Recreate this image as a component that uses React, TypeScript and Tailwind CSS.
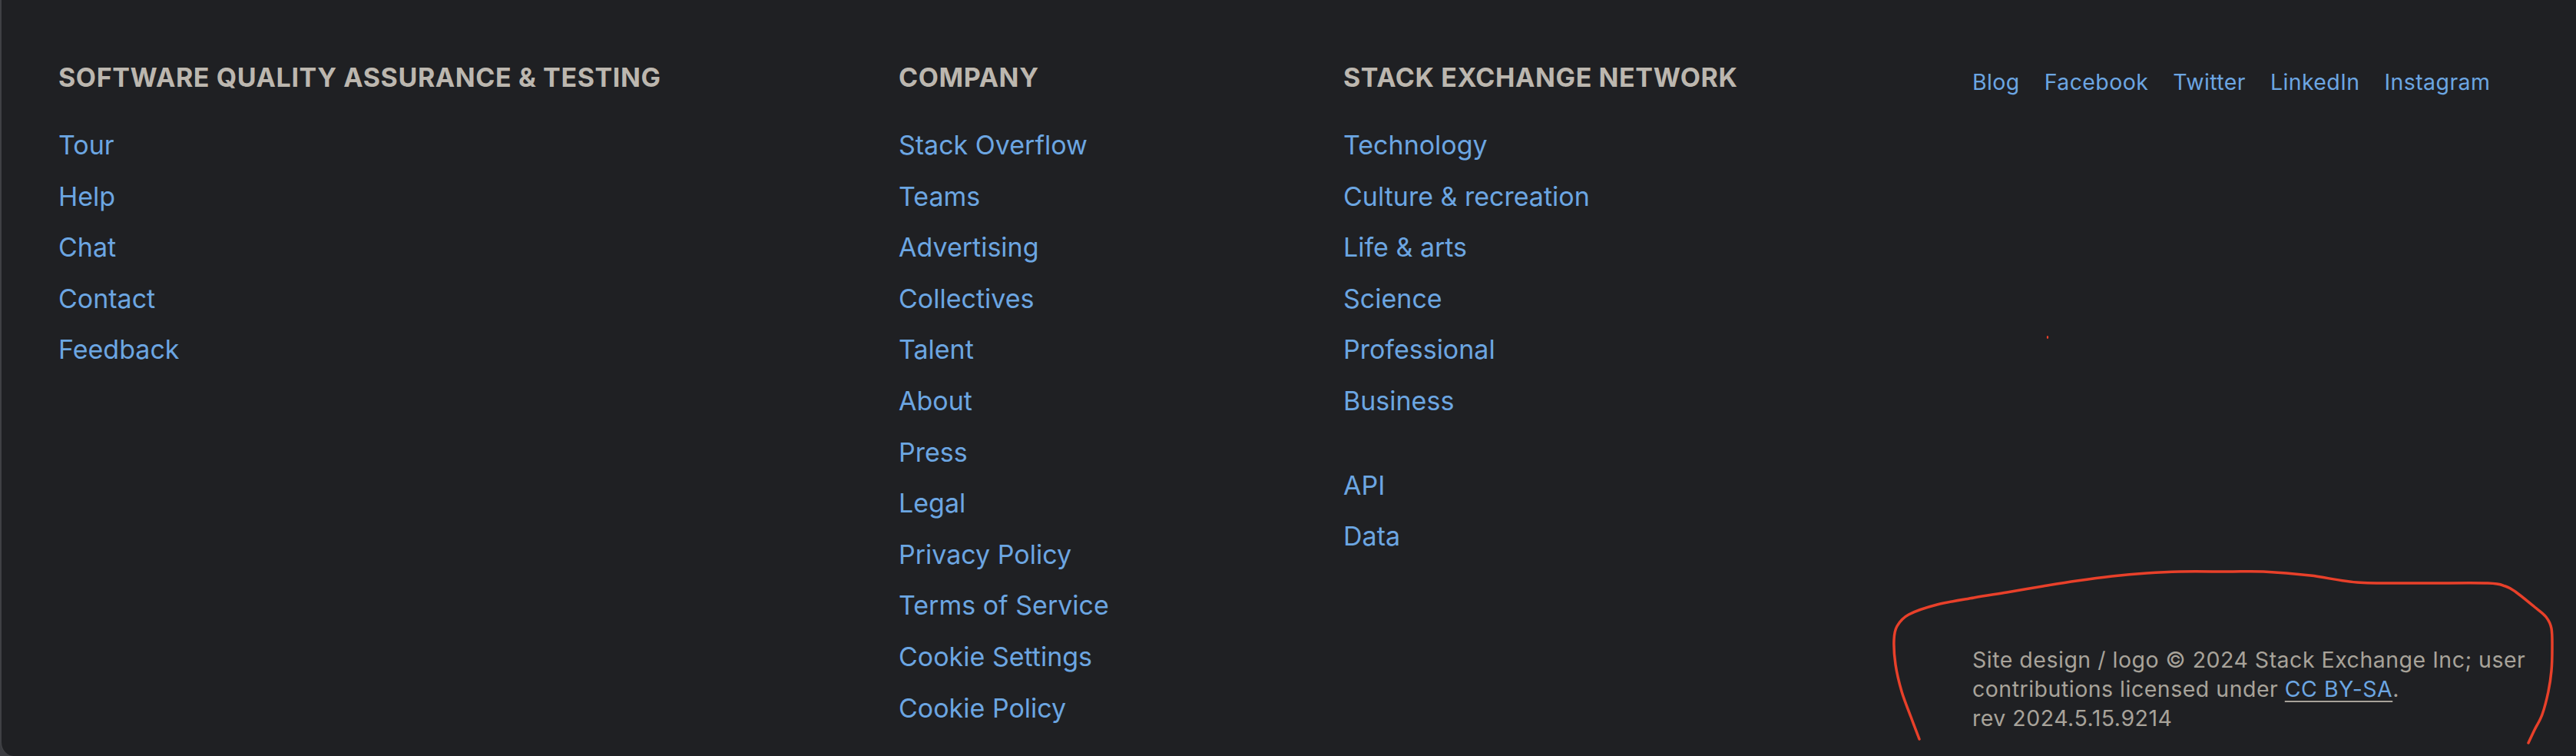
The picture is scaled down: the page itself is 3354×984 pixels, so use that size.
import React from 'react'

const siteLinks = ['Tour', 'Help', 'Chat', 'Contact', 'Feedback']

const companyLinks = [
    'Stack Overflow',
    'Teams',
    'Advertising',
    'Collectives',
    'Talent',
    'About',
    'Press',
    'Legal',
    'Privacy Policy',
    'Terms of Service',
    'Cookie Settings',
    'Cookie Policy',
]

const networkLinks = ['Technology', 'Culture & recreation', 'Life & arts', 'Science', 'Professional', 'Business']
const apiLinks = ['API', 'Data']
const socialLinks = ['Blog', 'Facebook', 'Twitter', 'LinkedIn', 'Instagram']

// hand drawn marker stroke around the copyright block
const scribble: [number, number][] = [
    [2499, 962], [2488, 933], [2476, 900], [2468, 865], [2466, 833], [2470, 815],
    [2485, 800], [2522, 787], [2570, 778], [2613, 771], [2660, 763], [2704, 756],
    [2750, 750], [2795, 746], [2838, 744], [2900, 744], [2947, 744], [3008, 749],
    [3069, 758], [3150, 759], [3239, 759], [3262, 763], [3275, 770], [3300, 790],
    [3315, 803], [3322, 818], [3323, 845], [3322, 873], [3318, 900], [3310, 930],
    [3300, 950], [3292, 967],
]

function smoothPath(pts: [number, number][]) {
    let d = `M${pts[0][0]} ${pts[0][1]}`
    for (let i = 0; i < pts.length - 1; i++) {
        const p0 = pts[i - 1] || pts[i]
        const p1 = pts[i]
        const p2 = pts[i + 1]
        const p3 = pts[i + 2] || p2
        const c1x = p1[0] + (p2[0] - p0[0]) / 6
        const c1y = p1[1] + (p2[1] - p0[1]) / 6
        const c2x = p2[0] - (p3[0] - p1[0]) / 6
        const c2y = p2[1] - (p3[1] - p1[1]) / 6
        d += ` C${c1x} ${c1y} ${c2x} ${c2y} ${p2[0]} ${p2[1]}`
    }
    return d
}

function Heading({ children }: { children: React.ReactNode }) {
    return (
        <h5 className="text-[34px] leading-[40px] font-bold tracking-[0.6px] text-[#bcb7af] uppercase mb-[35px] whitespace-nowrap">
            {children}
        </h5>
    )
}

function LinkList({ items }: { items: string[] }) {
    return (
        <ul>
            {items.map((item) => (
                <li key={item} className="text-[34px] leading-[66.6px] text-[#6ca6e2] whitespace-nowrap">
                    <a href="#">{item}</a>
                </li>
            ))}
        </ul>
    )
}

export default function App() {
    return (
        <div className="w-[3354px] h-[984px] bg-[#3b3c40] relative" style={{ fontFamily: 'Inter, "Noto Sans", sans-serif' }}>
            <footer className="h-full bg-[#1f2023] border-l-2 border-[#3f4044] rounded-bl-[18px] flex pl-[74px] pt-[81px] pb-[30px]">
                {/* site column */}
                <div className="w-[1094px] shrink-0">
                    <Heading>Software Quality Assurance &amp; Testing</Heading>
                    <LinkList items={siteLinks} />
                </div>

                {/* company column */}
                <div className="w-[579px] shrink-0">
                    <Heading>Company</Heading>
                    <LinkList items={companyLinks} />
                </div>

                {/* network column */}
                <div className="w-[819px] shrink-0">
                    <Heading>Stack Exchange Network</Heading>
                    <LinkList items={networkLinks} />
                    <div className="mt-[43px]">
                        <LinkList items={apiLinks} />
                    </div>
                </div>

                {/* social + copyright */}
                <div className="flex-1 flex flex-col">
                    <ul className="flex gap-[32px] mt-[9px] text-[28.5px] leading-[34px] tracking-[0.4px] text-[#6ca6e2]">
                        {socialLinks.map((s) => (
                            <li key={s}>
                                <a href="#">{s}</a>
                            </li>
                        ))}
                    </ul>
                    <p className="mt-auto text-[28.5px] leading-[38px] tracking-[0.5px] text-[#a8a39a] whitespace-nowrap">
                        Site design / logo © 2024 Stack Exchange Inc; user
                        <br />
                        contributions licensed under{' '}
                        <a href="#" className="text-[#6ca6e2] underline decoration-[#a8a39a] decoration-2 underline-offset-[5px]">
                            CC BY-SA
                        </a>
                        .
                        <br />
                        rev 2024.5.15.9214
                    </p>
                </div>
            </footer>

            {/* red marker annotation */}
            <svg className="absolute inset-0 pointer-events-none" width="3354" height="984" viewBox="0 0 3354 984">
                <path d={smoothPath(scribble)} fill="none" stroke="#e8402a" strokeWidth="3.5" strokeLinecap="round" strokeLinejoin="round" />
                <ellipse cx="2666" cy="439" rx="1.2" ry="2" fill="#e8402a" />
            </svg>
        </div>
    )
}
